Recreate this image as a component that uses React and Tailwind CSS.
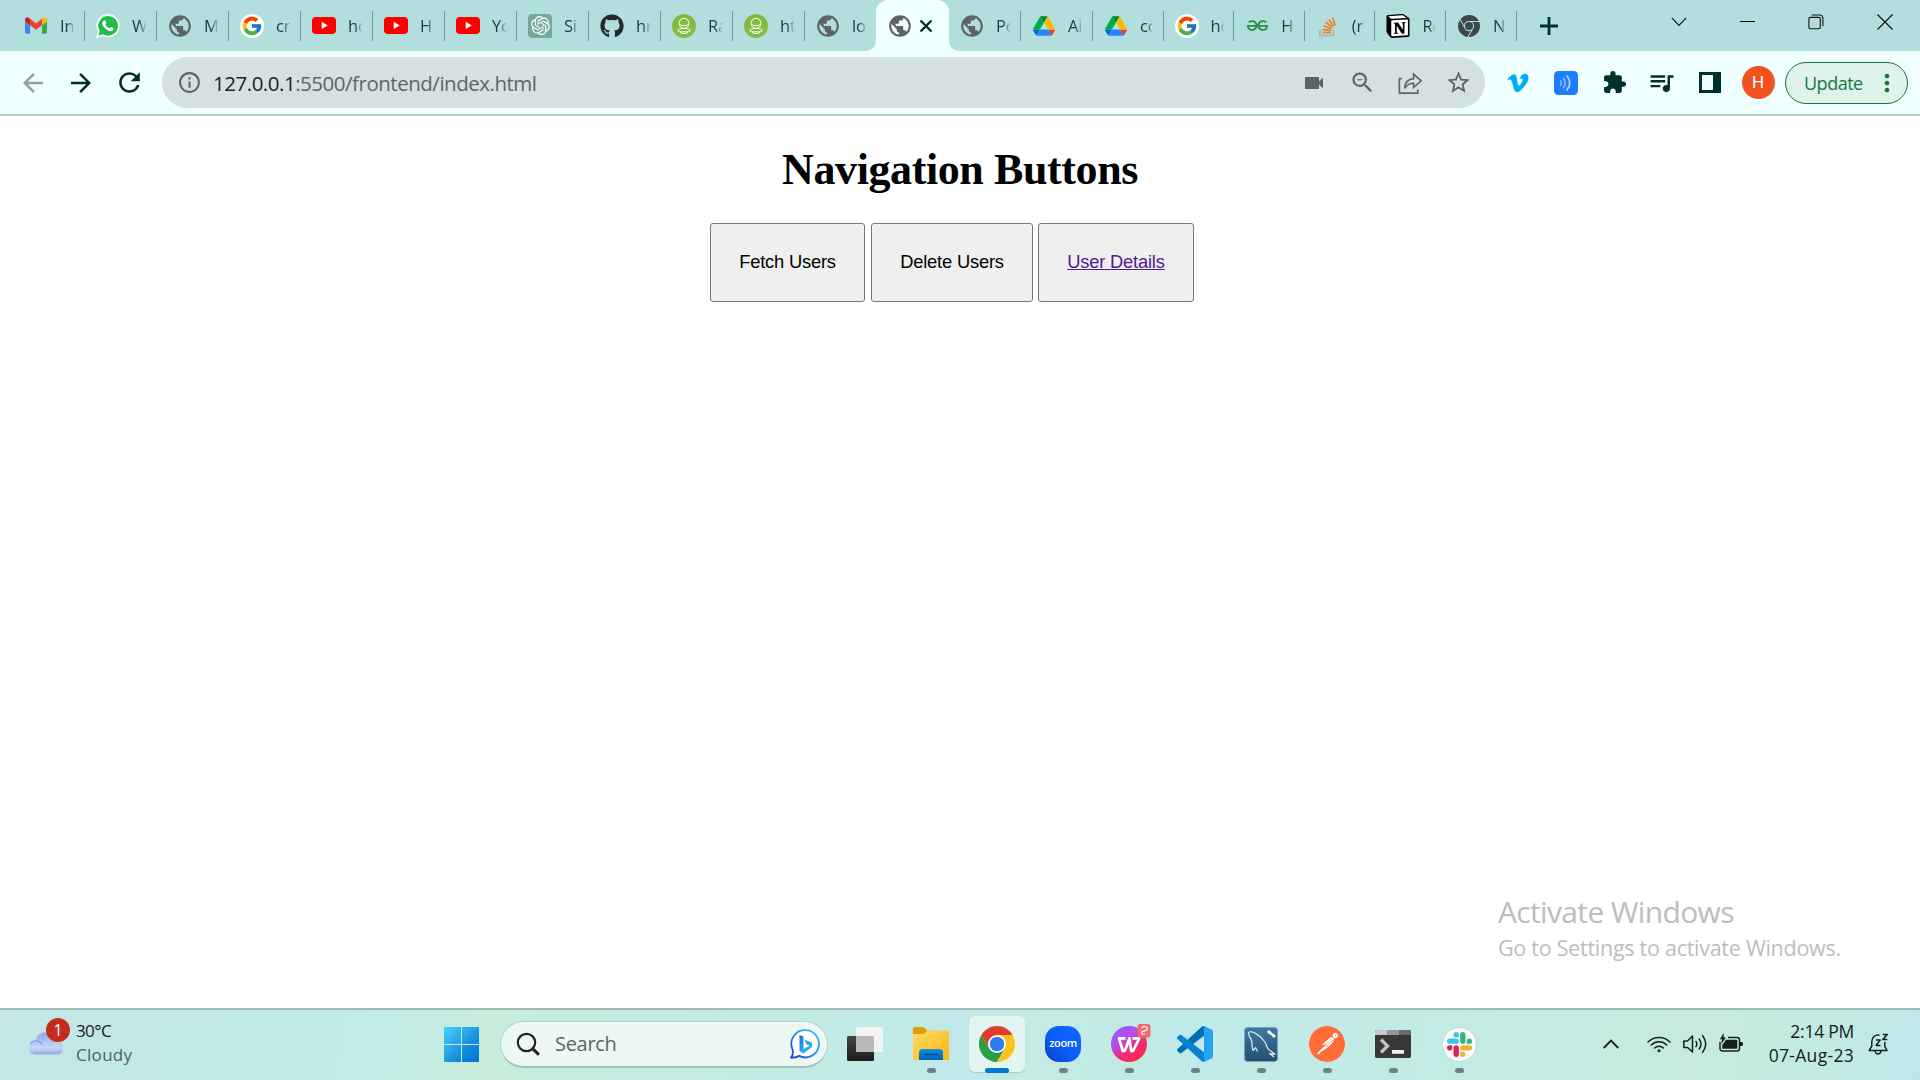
import React from "react";
import { FcGoogle } from "react-icons/fc";
import { FaGithub, FaVimeoV } from "react-icons/fa";
import {
  MdArrowBack, MdArrowForward, MdRefresh, MdInfoOutline, MdVideocam, MdZoomOut,
  MdStarOutline, MdExtension, MdQueueMusic, MdPublic, MdMoreVert,
} from "react-icons/md";
import { SiOpenai, SiGeeksforgeeks, SiNotion, SiGooglechrome, SiPostman } from "react-icons/si";

const Gmail = () => (
  <svg viewBox="52 42 88 66" className="w-[22px] h-[17px]">
    <path fill="#4285f4" d="M58 108h14V74L52 59v43c0 3.32 2.69 6 6 6" />
    <path fill="#34a853" d="M120 108h14c3.32 0 6-2.69 6-6V59l-20 15" />
    <path fill="#fbbc04" d="M120 48v26l20-15v-8c0-7.42-8.47-11.65-14.4-7.2" />
    <path fill="#ea4335" d="M72 74V48l24 18 24-18v26L96 92" />
    <path fill="#c5221f" d="M52 51v8l20 15V48l-5.6-4.2c-5.94-4.45-14.4-.22-14.4 7.2" />
  </svg>
);

const WhatsApp = () => (
  <svg viewBox="0 0 24 24" className="w-6 h-6">
    <path fill="#fff" d="M12.3 0A11.5 11.5 0 0 1 23.5 11.7A11.6 11.6 0 0 1 6.5 22L0 24L2 17.500A11.6 11.6 0 0 1 12.3 0z" />
    <path fill="#1ebe4b" d="M12.2 2A9.8 9.8 0 0 1 22 11.8A9.8 9.8 0 0 1 7.2 20.300L2.3 21.700L3.7 16.900A9.8 9.8 0 0 1 12.2 2z" />
    <path fill="#fff" d="M8.3 6.4c.5-.2 1-.1 1.2.4l.8 1.9c.2.6-.6 1.2-.9 1.700c.9 1.8 2.2 3 4.1 3.900c.6-.4 1.1-1.4 1.600-1.200l2 1c.6.4.2 1.700-.2 2.200c-1.1 1.2-2.8 1-4.300.4c-2.6-1-4.7-3-5.900-5.500c-.8-1.800-.3-4.200 1.600-4.800z" />
  </svg>
);

const Globe = () => <MdPublic className="w-[26px] h-[26px] shrink-0 text-[#5f6368]" />;

const Google = () => (
  <span className="flex w-6 h-6 items-center justify-center rounded-full bg-white">
    <FcGoogle className="w-[22px] h-[22px]" />
  </span>
);

const YouTube = () => (
  <svg viewBox="0 0 24 17" className="w-6 h-[17px]">
    <rect width="24" height="17" rx="4" fill="#f00" />
    <path d="M9.700 4.800v7.300l6-3.600z" fill="#fff" />
  </svg>
);

const OpenAi = () => (
  <span className="flex w-6 h-6 items-center justify-center rounded-tl rounded-tr rounded-bl bg-[#75a99c]">
    <SiOpenai className="w-[19px] h-[19px] text-white" />
  </span>
);

const GitHub = () => <FaGithub className="w-6 h-6 text-[#24292f]" />;

const Ring = () => (
  <svg viewBox="0 0 24 24" className="w-6 h-6">
    <circle cx="12" cy="12" r="12" fill="#83bb3f" />
    <g fill="none" stroke="#fff" strokeWidth="1">
      <circle cx="12" cy="9.300" r="5" />
      <path d="M8 10.500c2 1.600 6 1.600 8 0" />
      <ellipse cx="12" cy="16.200" rx="6.600" ry="1.700" />
      <path d="M7.500 18.200c1.500 1.700 7.500 1.700 9 0" />
    </g>
  </svg>
);

const Drive = () => (
  <svg viewBox="0 0 87.3 78" className="w-[22px] h-5">
    <path d="m6.6 66.850 3.850 6.650c.8 1.400 1.950 2.500 3.300 3.300l13.750-23.800h-27.500c0 1.550.4 3.100 1.200 4.500z" fill="#0066da" />
    <path d="m43.650 25-13.750-23.800c-1.350.8-2.500 1.900-3.300 3.300l-25.400 44a9.060 9.060 0 0 0 -1.200 4.500h27.500z" fill="#00ac47" />
    <path d="m73.550 76.800c1.350-.8 2.500-1.900 3.300-3.300l1.600-2.750 7.650-13.250c.8-1.400 1.200-2.950 1.200-4.500h-27.502l5.852 11.500z" fill="#ea4335" />
    <path d="m43.650 25 13.750-23.800c-1.350-.8-2.900-1.200-4.500-1.200h-18.500c-1.600 0-3.150.450-4.500 1.200z" fill="#00832d" />
    <path d="m59.800 53h-32.300l-13.750 23.800c1.350.8 2.900 1.200 4.500 1.200h50.800c1.600 0 3.150-.450 4.500-1.200z" fill="#2684fc" />
    <path d="m73.400 26.500-12.700-22c-.8-1.400-1.950-2.500-3.300-3.300l-13.750 23.800 16.150 28h27.450c0-1.550-.4-3.100-1.200-4.500z" fill="#ffba00" />
  </svg>
);

const Geeks = () => <SiGeeksforgeeks className="w-[21px] h-[21px] text-[#2f8d46]" />;

const StackOverflow = () => (
  <svg viewBox="0 0 24 24" className="w-6 h-6" fill="none">
    <path d="M4 16v5.500h13.500V16" stroke="#b3b5b5" strokeWidth="2" />
    <g stroke="#f48024" strokeWidth="1.700">
      <path d="M6.500 18.500h8.600" />
      <path d="M6.600 15.300l8.500 1.300" />
      <path d="M7.500 11.700l8 3.200" />
      <path d="M9.700 8.300l6.800 5" />
      <path d="M12.800 5.500l5 6.800" />
      <path d="M16.800 3.500l2.200 8" />
    </g>
  </svg>
);

const Notion = () => (
  <svg viewBox="0 0 24 24" className="w-6 h-6">
    <path d="M1 1.500L18 0.500L23 4.500V22L7 23.500L1 18z" fill="#fff" />
    <SiNotion x="0" y="0" size={24} color="#000" />
  </svg>
);

const ChromeGray = () => <SiGooglechrome className="w-[22px] h-[22px] text-[#3f474b]" />;

const tabs = [
  { icon: Gmail, label: "In" },
  { icon: WhatsApp, label: "W" },
  { icon: Globe, label: "M" },
  { icon: Google, label: "cr" },
  { icon: YouTube, label: "ho" },
  { icon: YouTube, label: "H" },
  { icon: YouTube, label: "Yo" },
  { icon: OpenAi, label: "Si" },
  { icon: GitHub, label: "hr" },
  { icon: Ring, label: "Ra" },
  { icon: Ring, label: "ht" },
  { icon: Globe, label: "lo", last: true },
  { icon: Globe, active: true },
  { icon: Globe, label: "Po" },
  { icon: Drive, label: "Ai" },
  { icon: Drive, label: "co", narrow: true },
  { icon: Google, label: "ho", narrow: true },
  { icon: Geeks, label: "H", narrow: true },
  { icon: StackOverflow, label: "(r", narrow: true },
  { icon: Notion, label: "Re", narrow: true },
  { icon: ChromeGray, label: "N", narrow: true },
];

function Tab({ icon: Icon, label, active, narrow, last }) {
  if (active) {
    return (
      <div className="relative flex h-[51px] w-[73px] shrink-0 items-center gap-[7px] rounded-t-[12px] bg-[#f0ffff] pl-3">
        <svg viewBox="0 0 10 10" className="absolute bottom-0 -left-[10px] w-[10px] h-[10px]">
          <path d="M0 10A10 10 0 0 0 10 0V10z" fill="#f0ffff" />
        </svg>
        <svg viewBox="0 0 10 10" className="absolute bottom-0 -right-[10px] w-[10px] h-[10px]">
          <path d="M10 10A10 10 0 0 1 0 0V10z" fill="#f0ffff" />
        </svg>
        <span className="flex w-6 items-center justify-center">
          <Icon />
        </span>
        <svg viewBox="0 0 14 14" className="w-[14px] h-[14px]" stroke="#00302c" strokeWidth="2.400">
          <path d="M1.500 1.500l11 11M12.500 1.500l-11 11" />
        </svg>
      </div>
    );
  }
  return (
    <div
      className={`${narrow ? "w-[70.6px]" : last ? "w-[71px]" : "w-[72px]"} ${last ? "border-transparent" : "border-[#6b9c98]"} flex h-[30px] shrink-0 items-center border-r pl-[11px]`}
    >
      <span className="flex w-6 shrink-0 items-center justify-center">
        <Icon />
      </span>
      <span className={`${narrow ? "w-[14px] [mask-image:linear-gradient(to_right,black_50%,transparent_95%)]" : "w-[15px] [mask-image:linear-gradient(to_right,black_45%,transparent)]"} ml-3 overflow-hidden whitespace-nowrap text-[16.5px] leading-6 tracking-[-0.2px] text-[#14403d]`}>
        {label}
      </span>
    </div>
  );
}

function TabStrip() {
  return (
    <div className="flex h-[51px] items-center bg-[#b2dfde] pl-[13px]">
      {tabs.map((t, i) => (
        <Tab key={i} {...t} />
      ))}
      <svg viewBox="0 0 18 18" className="ml-[23px] w-[18px] h-[18px]" stroke="#00302c" strokeWidth="2.800">
        <path d="M9 0v18M0 9h18" />
      </svg>
      <div className="ml-auto mr-px mb-2 flex h-[43px] items-center">
        <span className="flex w-[69px] justify-center">
          <svg viewBox="0 0 16 10" className="w-4 h-[10px]" fill="none" stroke="#111" strokeWidth="1.100">
            <path d="M.8 .8L8 8.500L15.200 .8" />
          </svg>
        </span>
        <span className="flex w-[68px] justify-center">
          <span className="h-px w-[15px] bg-black" />
        </span>
        <span className="flex w-[69px] justify-center">
          <svg viewBox="0 0 16 16" className="w-4 h-4" fill="none" stroke="#111" strokeWidth="1.100">
            <rect x=".9" y="3.400" width="11.400" height="11.400" rx="1.500" />
            <path d="M3.700 1h8a3.200 3.200 0 0 1 3.200 3.200v8" />
          </svg>
        </span>
        <span className="flex w-[69px] justify-center">
          <svg viewBox="0 0 16 16" className="w-4 h-4" stroke="#111" strokeWidth="1.200">
            <path d="M.5 .5l15 15M15.500 .5l-15 15" />
          </svg>
        </span>
      </div>
    </div>
  );
}

const Cell = ({ children }) => <span className="flex w-12 shrink-0 items-center justify-center">{children}</span>;

function Toolbar() {
  return (
    <div className="flex h-[65px] items-center border-b-2 border-[#b9cccc] bg-[#f0ffff] pl-[9px] pr-3 text-[#00302c]">
      <Cell><MdArrowBack className="w-[30px] h-[30px] text-[#8aa5a4]" /></Cell>
      <Cell><MdArrowForward className="w-[30px] h-[30px]" /></Cell>
      <Cell><MdRefresh className="w-[31px] h-[31px]" /></Cell>
      <div className="ml-[9px] flex h-[51px] w-[1323px] shrink-0 items-center rounded-full bg-[#d5e0e0] pl-[15px] pr-[3px] text-[#5f6368]">
        <MdInfoOutline className="w-[25px] h-[25px]" />
        <span className="ml-[11px] grow text-[20.5px] leading-7 tracking-[-0.48px]">
          <span className="text-[#202124]">127.0.0.1</span>:5500/frontend/index.html
        </span>
        <Cell><MdVideocam className="w-6 h-6" /></Cell>
        <Cell><MdZoomOut className="w-[27px] h-[27px]" /></Cell>
        <Cell>
          <svg viewBox="0 0 24 24" className="w-[26px] h-[26px]" fill="none" stroke="currentColor" strokeWidth="1.500">
            <path d="M4.500 8H2.200v13.300h17V18" />
            <path d="M7 17c.3-5.500 3-8.500 8.300-9V3.800l7 6.200-7 6.200V12.200c-3.800 0-6.300 1.500-8.300 4.800z" />
          </svg>
        </Cell>
        <Cell><MdStarOutline className="w-[27px] h-[27px]" /></Cell>
      </div>
      <div className="ml-[9px] flex items-center">
        <Cell><FaVimeoV className="w-6 h-6 text-[#00adef]" /></Cell>
        <Cell>
          <svg viewBox="0 0 24 24" className="w-6 h-6" fill="none" strokeLinecap="round">
            <rect width="24" height="24" rx="4.500" fill="#1c7dff" />
            <path d="M6.700 10q1.300 2 0 4.200" stroke="#8dbfff" strokeWidth="1.500" />
            <path d="M9.500 7.500q3.200 4.500 0 9" stroke="#8dbfff" strokeWidth="1.700" />
            <path d="M13 5q5.500 7 0 14" stroke="#b4d4ff" strokeWidth="1.700" />
          </svg>
        </Cell>
        <Cell><MdExtension className="w-[25px] h-[25px]" /></Cell>
        <Cell><MdQueueMusic className="mr-[2px] w-[29px] h-[29px]" /></Cell>
        <Cell>
          <svg viewBox="0 0 22 21" className="w-[22px] h-[21px]">
            <path fillRule="evenodd" d="M0 0h22v21H0zM3 3v15h11V3z" fill="#00302c" />
          </svg>
        </Cell>
        <Cell>
          <span className="flex h-[33px] w-[33px] items-center justify-center rounded-full bg-[#f4511e] font-[Roboto] text-[17px] text-white">H</span>
        </Cell>
      </div>
      <div className="ml-[3px] flex h-[42px] w-[123px] shrink-0 items-center rounded-full border-[1.5px] border-[#18763a] bg-[#dff2ec] pl-[18px] text-[#18763a]">
        <span className="w-[59px] whitespace-nowrap text-[18px] leading-6 tracking-[-0.5px]">Update</span>
        <MdMoreVert className="ml-[10px] w-7 h-7" />
      </div>
    </div>
  );
}

function Page() {
  const button = "h-[79px] shrink-0 whitespace-nowrap rounded-[3px] border border-[#767676] bg-[#efefef] text-center text-[18.33px] leading-none tracking-[-0.2px] text-black";
  return (
    <main className="relative flex h-[892px] flex-col bg-white">
      <h1 className="mt-[28px] text-center font-['Liberation_Serif'] text-[44px] font-bold leading-[51px] tracking-[-0.4px] text-black">Navigation Buttons</h1>
      <div className="mt-[28px] flex pl-[710px] font-['Liberation_Sans']">
        <button className={`${button} mr-[6px] w-[155px]`}>Fetch Users</button>
        <button className={`${button} mr-[5px] w-[162px]`}>Delete Users</button>
        <button className={`${button} w-[156px]`}>
          <a className="text-[#551a8b] underline">User Details</a>
        </button>
      </div>
      <div className="mt-auto mb-[44px] ml-[1498px] whitespace-nowrap text-[#bdbdbd]">
        <p className="text-[30px] leading-10 tracking-[-0.65px]">Activate Windows</p>
        <p className="text-[21.5px] leading-8 tracking-[-0.27px]">Go to Settings to activate Windows.</p>
      </div>
    </main>
  );
}

const Folder = () => (
  <svg viewBox="0 0 36 34" className="w-9 h-[34px]">
    <defs>
      <linearGradient id="fold" x1="0" y1="0" x2="1" y2="1">
        <stop stopColor="#ffd869" /><stop offset="1" stopColor="#fbb80f" />
      </linearGradient>
      <linearGradient id="foldTray" x1="0" y1="0" x2="0" y2="1">
        <stop stopColor="#1391dc" /><stop offset="1" stopColor="#0062b8" />
      </linearGradient>
    </defs>
    <path d="M0 1.500Q0 0 1.500 0H10.500L14.500 3.500V8H0z" fill="#dfa000" />
    <path d="M0 7H10.500L14.500 3.500H35Q36 3.500 36 4.500V33H0z" fill="url(#fold)" />
    <path d="M6 33V25.500Q6 22 9.500 22H26.500Q30 22 30 25.500V33z" fill="url(#foldTray)" />
    <path d="M10.500 27.500h15" stroke="#0a4f94" strokeWidth="1.600" />
  </svg>
);

const Chrome = () => (
  <svg viewBox="0 0 48 48" className="w-9 h-9">
    <path d="M3.220 12A24 24 0 0 1 44.780 12H24L13.610 30z" fill="#e33b2e" />
    <path d="M3.220 12L13.610 30H34.390L24 48A24 24 0 0 1 3.220 12z" fill="#2a9d47" />
    <path d="M44.780 12H24L34.390 30L24 48A24 24 0 0 0 44.780 12z" fill="#fcc31e" />
    <circle cx="24" cy="24" r="12" fill="#fff" />
    <circle cx="24" cy="24" r="9.700" fill="#2f7de9" />
  </svg>
);

const Zoom = () => (
  <span className="flex h-9 w-9 items-center justify-center rounded-[14px] bg-linear-to-tr from-[#0948c8] via-[#0b5cff] to-[#1368ff] pb-[3px] font-['Open_Sans'] text-[11px] font-semibold leading-none tracking-[-0.4px] text-white">zoom</span>
);

const Wps = () => (
  <svg viewBox="0 0 40 40" className="w-10 h-10">
    <defs>
      <linearGradient id="wps" x1=".1" y1="0" x2=".8" y2="1">
        <stop stopColor="#8a5cf5" /><stop offset=".35" stopColor="#b44df0" /><stop offset=".65" stopColor="#ee2a7a" /><stop offset="1" stopColor="#ff2a3a" />
      </linearGradient>
    </defs>
    <circle cx="18" cy="21" r="18" fill="url(#wps)" />
    <path d="M14.500 15.300H8L11.800 28H13.800L18.500 15.300L20.200 28H22L28.300 15.300H21.500" fill="none" stroke="#fff" strokeWidth="2.700" strokeLinejoin="round" />
    <rect x="26.500" y="1" width="13" height="13.500" rx="2.500" fill="#f06a6c" />
    <path d="M30.500 5q1-1.800 3.500-1.300q3 .5 2.200 2.600q-.6 1.500-4.500 2.100q-1.700.8-.7 2.400q1.500 1 3-.2" fill="none" stroke="#fff" strokeWidth="1.200" />
  </svg>
);

const VsCode = () => (
  <svg viewBox="0 0 100 100" className="w-9 h-9">
    <path fill="#0070b5" d="M96.460 10.800 75.860.88a6.230 6.230 0 0 0-7.110 1.200L1.300 63.580a4.170 4.170 0 0 0 0 6.170l5.510 5a4.170 4.170 0 0 0 5.320.24L93.370 13.360c2.730-2.070 6.630-.13 6.630 3.290v-.24c0-2.400-1.380-4.580-3.540-5.610z" />
    <path fill="#0a84d2" d="M96.460 89.200l-20.600 9.920a6.230 6.230 0 0 1-7.110-1.200L1.300 36.420a4.170 4.170 0 0 1 0-6.170l5.510-5a4.170 4.170 0 0 1 5.320-.24l81.240 61.630c2.730 2.070 6.630.13 6.630-3.290v.24c0 2.400-1.380 4.580-3.540 5.610z" />
    <path fill="#22a4f2" d="M75.860 99.130a6.240 6.240 0 0 1-7.110-1.210c2.310 2.310 6.250.67 6.250-2.590V4.670c0-3.260-3.940-4.900-6.250-2.590a6.240 6.240 0 0 1 7.110-1.210l20.600 9.910A6.250 6.250 0 0 1 100 16.400v67.200c0 2.400-1.380 4.590-3.540 5.630l-20.600 9.900z" />
  </svg>
);

const Workbench = () => (
  <svg viewBox="0 0 34 35" className="w-[34px] h-[35px]" fill="none">
    <defs>
      <linearGradient id="wb" x1="0" y1="0" x2="0" y2="1">
        <stop stopColor="#3d7ba3" /><stop offset="1" stopColor="#22506f" />
      </linearGradient>
    </defs>
    <rect x=".5" y=".5" width="33" height="34" rx="3" fill="url(#wb)" stroke="#7fa4b8" />
    <path d="M9 23.500C7.500 20 8.500 17 7.500 13.500C6.500 10.500 4.300 8.500 4.500 5.800C5.500 4.500 8 4.700 10 5.500C14 7.500 17.500 10.500 20.500 14.500C22.500 17.500 22.500 20.500 25 22.800C26.500 24.300 28.500 25 30.500 27L26 26.800L30 30M9 23.500L11.500 20.800L13.500 24.500" stroke="#e8f1f5" strokeWidth="1.200" />
    <path d="M25 5l5 4" stroke="#fff" strokeWidth="2.400" />
    <circle cx="25" cy="5" r="1.800" fill="#fff" /><circle cx="30" cy="9" r="1.600" fill="#fff" />
  </svg>
);

const Postman = () => (
  <span className="flex h-9 w-9 items-center justify-center rounded-full bg-white">
    <SiPostman className="h-9 w-9 text-[#ff6c37]" />
  </span>
);

const Terminal = () => (
  <svg viewBox="0 0 36 28" className="w-9 h-7">
    <rect width="36" height="28" rx="1.800" fill="#383838" />
    <path d="M1.800 0H12V5H0V1.800Q0 0 1.800 0z" fill="#c9c9c9" />
    <path d="M12 0h12v5H12z" fill="#979797" />
    <path d="M24 0h10.200Q36 0 36 1.800V5H24z" fill="#6a6a6a" />
    <path d="M6 9.500l6.500 6.500L6 22.500" fill="none" stroke="#c6c6c6" strokeWidth="3.200" />
    <rect x="17" y="20" width="12" height="3.800" rx=".6" fill="#f1f1f1" />
  </svg>
);

const Slack = () => (
  <span className="flex h-[35px] w-[35px] items-center justify-center rounded-full border border-[#c9d8d6] bg-[#fafafa]">
    <svg viewBox="0 0 24 24" className="h-[25px] w-[25px]">
      <path fill="#e01e5a" d="M5.042 15.165a2.528 2.528 0 0 1-2.520 2.523A2.528 2.528 0 0 1 0 15.165a2.527 2.527 0 0 1 2.522-2.520h2.520v2.520z M6.313 15.165a2.527 2.527 0 0 1 2.521-2.520 2.527 2.527 0 0 1 2.521 2.520v6.313A2.528 2.528 0 0 1 8.834 24a2.528 2.528 0 0 1-2.521-2.522v-6.313z" />
      <path fill="#36c5f0" d="M8.834 5.042a2.528 2.528 0 0 1-2.521-2.520A2.528 2.528 0 0 1 8.834 0a2.528 2.528 0 0 1 2.521 2.522v2.520H8.834z M8.834 6.313a2.528 2.528 0 0 1 2.521 2.521 2.528 2.528 0 0 1-2.521 2.521H2.522A2.528 2.528 0 0 1 0 8.834a2.528 2.528 0 0 1 2.522-2.521h6.312z" />
      <path fill="#2eb67d" d="M18.956 8.834a2.528 2.528 0 0 1 2.522-2.521A2.528 2.528 0 0 1 24 8.834a2.528 2.528 0 0 1-2.522 2.521h-2.522V8.834z M17.688 8.834a2.528 2.528 0 0 1-2.523 2.521 2.527 2.527 0 0 1-2.520-2.521V2.522A2.527 2.527 0 0 1 15.165 0a2.528 2.528 0 0 1 2.523 2.522v6.312z" />
      <path fill="#ecb22e" d="M15.165 18.956a2.528 2.528 0 0 1 2.523 2.522A2.528 2.528 0 0 1 15.165 24a2.527 2.527 0 0 1-2.520-2.522v-2.522h2.520z M15.165 17.688a2.527 2.527 0 0 1-2.520-2.523 2.526 2.526 0 0 1 2.520-2.520h6.313A2.527 2.527 0 0 1 24 15.165a2.528 2.528 0 0 1-2.522 2.523h-6.313z" />
    </svg>
  </span>
);

const TaskView = () => (
  <svg viewBox="0 0 36 34" className="w-9 h-[34px]">
    <defs>
      <linearGradient id="tvDark" x1="0" y1="0" x2="0" y2="1">
        <stop stopColor="#444" /><stop offset="1" stopColor="#1c1c1c" />
      </linearGradient>
    </defs>
    <rect y="9" width="27" height="25" rx="1.500" fill="url(#tvDark)" />
    <rect x="9" y="0" width="27" height="25" rx="1.500" fill="#f3f3f3" />
    <path d="M9 9H26Q27 9 27 10V25H10Q9 25 9 24z" fill="#b9b9b9" />
  </svg>
);

const apps = [
  { icon: TaskView },
  { icon: Folder, running: true },
  { icon: Chrome, active: true },
  { icon: Zoom, running: true },
  { icon: Wps, running: true, shift: true },
  { icon: VsCode, running: true },
  { icon: Workbench, running: true },
  { icon: Postman, running: true },
  { icon: Terminal, running: true },
  { icon: Slack, running: true },
];

function AppButton({ icon: Icon, running, active, shift }) {
  return (
    <div className="flex w-[66px] justify-center">
      <div className={`${active ? "bg-[#e2f5f0] shadow-[0_1px_1px_#a9cdc6]" : ""} relative flex h-14 w-14 items-center justify-center rounded-md`}>
        <span className={shift ? "ml-1 -mt-[2px]" : ""}>
          <Icon />
        </span>
        {active && <span className="absolute -bottom-px h-[5px] w-6 rounded-full bg-[#0078d4]" />}
        {running && <span className="absolute -bottom-px h-[5px] w-[9px] rounded-full bg-[#6e8482]" />}
      </div>
    </div>
  );
}

function Taskbar() {
  return (
    <footer className="flex h-[72px] items-center border-t-2 border-[#a1bab8] pb-[2px] bg-[linear-gradient(100deg,#c4e6e7_0%,#bfeae8_14%,#c0ebe7_20%,#c7ecdb_25%,#c7ecdb_27%,#c3ebe3_34%,#c0eae6_47%,#c0e8ea_50%,#c3ebe3_54%,#c0eae8_62%,#c3ebe3_80%,#c6ebdd_88%,#c2eae2_95%,#bfe7eb_100%)]">
      <div className="flex w-[444px] items-center pl-[29px]">
        <span className="relative block h-9 w-9">
          <svg viewBox="0 0 36 24" className="absolute bottom-[7px] left-0 w-9 h-6">
            <defs>
              <linearGradient id="cl" x1="0" y1="0" x2="0" y2="1">
                <stop stopColor="#86a8ec" /><stop offset=".7" stopColor="#c9d8f8" /><stop offset="1" stopColor="#8fa8e4" />
              </linearGradient>
            </defs>
            <path d="M6.500 23.500a6.500 6.500 0 0 1-.5-13A10 10 0 0 1 15 1.500a11 11 0 0 1 11 9a6.600 6.600 0 0 1 3.500 13z" fill="url(#cl)" />
            <path d="M1 13a7 7 0 0 1 12 .5" fill="none" stroke="#7e9ee6" strokeWidth="1.200" />
          </svg>
          <span className="absolute -top-2 left-[17px] flex h-6 w-6 items-center justify-center rounded-full bg-[#c42b1c] text-[16px] leading-none text-white">1</span>
        </span>
        <span className="mb-[2px] ml-[11px] text-[17px] leading-6">
          <span className="block tracking-[-0.6px] text-[#1a1a1a]">30°C</span>
          <span className="block tracking-[0.3px] text-[#4f6361]">Cloudy</span>
        </span>
      </div>
      <svg viewBox="0 0 35 35" className="w-[35px] h-[35px] shrink-0">
        <defs>
          <linearGradient id="win" gradientUnits="userSpaceOnUse" x1="0" y1="0" x2="35" y2="35">
            <stop stopColor="#4bd0fb" /><stop offset=".7" stopColor="#0f86db" /><stop offset="1" stopColor="#0074d0" />
          </linearGradient>
        </defs>
        <path fill="url(#win)" d="M1 0H17V17H0V1Q0 0 1 0zM18 0H34Q35 0 35 1V17H18zM0 18H17V35H1Q0 35 0 34zM18 18H35V34Q35 35 34 35H18z" />
      </svg>
      <div className="ml-[21px] flex h-[47px] w-[328px] shrink-0 items-center rounded-full border border-b-2 border-[#b3d6cd] border-b-[#9fc1b8] bg-[#edf8f5] pl-[15px]">
        <svg viewBox="0 0 24 24" className="w-6 h-6" fill="none" stroke="#222">
          <circle cx="10.500" cy="10.500" r="8.700" strokeWidth="2.200" />
          <path d="M16.800 16.800l5.200 5" strokeWidth="3" strokeLinecap="round" />
        </svg>
        <span className="mt-px ml-[15px] text-[20px] leading-7 tracking-[-0.3px] text-[#5b6664]">Search</span>
        <svg viewBox="0 0 30 30" className="ml-auto mr-[7px] w-[30px] h-[30px]">
          <defs>
            <linearGradient id="bing" x1="1" y1="0" x2="0" y2="1">
              <stop stopColor="#27c7f3" /><stop offset=".5" stopColor="#1f8fe8" /><stop offset="1" stopColor="#1a3fc0" />
            </linearGradient>
            <linearGradient id="bingB" x1="0" y1="0" x2="1" y2="1">
              <stop stopColor="#1d6fe0" /><stop offset="1" stopColor="#2dd6e6" />
            </linearGradient>
          </defs>
          <path d="M15.500 1.200a13.600 13.600 0 1 1-6.300 25.700C7 28 4 29 1.200 28.500C3 26.500 3.200 23.800 2.600 20.500A13.600 13.600 0 0 1 15.500 1.200z" fill="#fff" stroke="url(#bing)" strokeWidth="1.800" />
          <path d="M9.500 6l4 1.500V20l6-3.300-3-1.500-2-4.500 7.500 2.800v4.500l-8.500 6.500-4-2.500z" fill="url(#bingB)" />
        </svg>
      </div>
      <div className="ml-1 flex">
        {apps.map((a, i) => (
          <AppButton key={i} {...a} />
        ))}
      </div>
      <div className="ml-auto flex items-center pr-[31px] text-[#16211f]">
        <svg viewBox="0 0 16 10" className="w-4 h-[10px]" fill="none" stroke="currentColor" strokeWidth="1.800">
          <path d="M.7 9L8 1.500L15.300 9" />
        </svg>
        <svg viewBox="0 0 24 18" className="ml-7 w-6 h-[18px]" fill="none" stroke="currentColor" strokeWidth="1.500" strokeLinecap="round">
          <path d="M1 7a15.500 15.500 0 0 1 22 0M4.300 10a11 11 0 0 1 15.400 0M7.600 13a6.500 6.500 0 0 1 8.800 0" />
          <circle cx="12" cy="15.800" r="1.500" fill="currentColor" stroke="none" />
        </svg>
        <svg viewBox="0 0 24 20" className="ml-3 w-6 h-5" fill="none" stroke="currentColor" strokeWidth="1.500" strokeLinecap="round" strokeLinejoin="round">
          <path d="M.8 7h3.700L9.500 2v16L4.500 13.500H.8z" />
          <path d="M13 7.500q1.800 2.500 0 5.200M16.200 5q3.600 5 0 10M19.500 1.500q6.500 8.500 0 17" />
        </svg>
        <svg viewBox="0 0 24 20" className="mb-[2px] ml-3 w-6 h-5" fill="none" stroke="currentColor" strokeWidth="1.500">
          <path d="M1 9v6.500a2.500 2.500 0 0 0 2.500 2.500H18a2.500 2.500 0 0 0 2.500-2.500V7A2.500 2.500 0 0 0 18 4.500H9" />
          <path d="M3.200 15.800V12l3.800-5.200h10.500q.8 0 .8.800v7.400q0 .8-.8.800z" fill="currentColor" stroke="none" />
          <path d="M21 9h1.500q1.500 0 1.500 1.500v1.200q0 1.300-1.500 1.300H21z" fill="currentColor" stroke="none" />
          <path d="M4.800 0L.8 6.300H3L2.200 11L7 4.600H4.600z" fill="currentColor" stroke="none" />
        </svg>
        <span className="mb-[2px] ml-[23px] w-[88px] whitespace-nowrap text-right text-[17.5px] leading-6">
          <span className="block tracking-[-0.25px]">2:14 PM</span>
          <span className="block tracking-[0.3px]">07-Aug-23</span>
        </span>
        <svg viewBox="0 0 21 22" className="ml-[14px] w-[21px] h-[22px]" fill="none" stroke="currentColor" strokeWidth="1.500" strokeLinejoin="round">
          <path d="M11.500 2.200C7 1.400 3.800 4.500 3.800 8.500V13L1.200 17.500H19L16.800 13.500V9" />
          <path d="M7 18q.5 3 3 3t3-3" />
          <path d="M8 7h4.300L8 12.500h4.500M14.800 1.500H19.300L14.800 6.500h4.500" />
        </svg>
      </div>
    </footer>
  );
}

export default function App() {
  return (
    <div className="flex h-[1080px] w-[1920px] flex-col overflow-hidden bg-white font-['Open_Sans','Noto_Sans',sans-serif]">
      <TabStrip />
      <Toolbar />
      <Page />
      <Taskbar />
    </div>
  );
}
